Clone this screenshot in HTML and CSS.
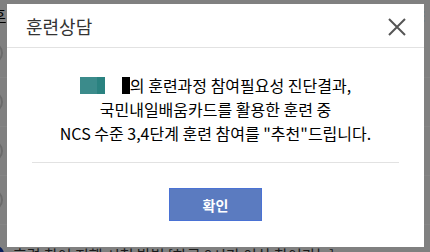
FILE: index.html
```html
<html>
    <head>
        <title>훈련상담</title>
        <link rel="stylesheet" href="styles.css">
    </head>
    <body>
        <div class="page">
            <div class="top-row"><span class="top-text">후</span><span class="dots">⋮</span></div>
            <div class="row"><span class="radio"></span></div>
            <div class="row"><span class="radio"></span></div>
            <div class="row"><span class="radio"></span></div>
            <div class="row"><span class="radio"></span></div>
            <div class="bottom-row"><span class="dot"></span><span class="bottom-text">훈련 참여 진행 시청 방법 [하루 8시간 이상 참여가능]</span></div>
        </div>

        <div class="overlay"></div>

        <div class="modal">
            <header>
                <h3>훈련상담</h3>
                <div class="cross">
                    <svg width="18" height="18" viewBox="0 0 18 18">
                        <path d="M1 1 L17 17 M17 1 L1 17" stroke="#555" stroke-width="2" fill="none"/>
                    </svg>
                </div>
            </header>
            <div class="content">
                <div class="message">
                    <p><span class="mask"></span><span class="bar"></span>의 훈련과정 참여필요성 진단결과,</p>
                    <p>국민내일배움카드를 활용한 훈련 중</p>
                    <p>NCS 수준 3,4단계 훈련 참여를 "추천"드립니다.</p>
                </div>
                <div class="footer">
                    <button>확인</button>
                </div>
            </div>
        </div>
    </body>
</html>
```

FILE: styles.css
```css
body{
    margin: 0;
    width: 430px;
    height: 252px;
    overflow: hidden;
    background: #f6f6f6;
    font-family: "Noto Sans CJK KR", "Noto Sans", sans-serif;
}
.page{
    display: flex;
    flex-direction: column;
}
.top-row{
    height: 29px;
    display: flex;
    justify-content: space-between;
    align-items: center;
}
.top-text{
    margin-left: -8px;
    font-size: 15px;
    color: #000;
    text-decoration: underline;
}
.dots{
    font-size: 14px;
    color: #000;
}
.row{
    height: 48px;
    border-bottom: 1px solid #ffffff;
    display: flex;
    align-items: center;
}
.radio{
    width: 18px;
    height: 18px;
    border: 2px solid #ccc;
    border-radius: 50%;
    margin-left: -19px;
}
.bottom-row{
    display: flex;
    align-items: center;
    height: 30px;
    padding-top: 14px;
}
.dot{
    width: 16px;
    height: 16px;
    border-radius: 50%;
    background: #1a3fae;
    margin-left: -12px;
    margin-right: 9px;
}
.bottom-text{
    font-size: 15px;
    color: #333;
}
.overlay{
    position: fixed;
    top: 0;
    left: 0;
    right: 0;
    bottom: 0;
    background: rgba(0,0,0,0.48);
}
.modal{
    position: fixed;
    top: 4px;
    left: 7px;
    width: 417px;
    height: 243px;
    background: white;
}
header{
    height: 43px;
    border-bottom: 1px solid #e2e2e2;
    display: flex;
    justify-content: space-between;
    align-items: center;
    padding: 0 19px;
}
h3{
    margin: 0;
    font-size: 18px;
    font-weight: normal;
    color: #333;
}
.cross{
    width: 18px;
    height: 18px;
    margin-top: 2px;
    margin-right: -1px;
    cursor: pointer;
}
.cross svg{
    display: block;
}
.content{
    padding: 0 25px;
}
.message{
    padding: 25px 0 17px;
    border-bottom: 1px solid #e2e2e2;
    text-align: center;
    font-size: 16px;
    color: #000;
}
p{
    margin: 0;
    line-height: 24px;
}
.mask{
    display: inline-block;
    width: 25px;
    height: 17px;
    background: linear-gradient(90deg,#3b8b8b 68%,#2a8280 68%);
    margin-right: 17px;
    vertical-align: -2px;
}
.bar{
    display: inline-block;
    width: 8px;
    height: 17px;
    background: #000;
    vertical-align: -2px;
}
.footer{
    display: flex;
    justify-content: center;
    padding-top: 25px;
}
button{
    width: 93px;
    height: 33px;
    background: #5b7bc0;
    border: 1px solid #4a72d4;
    color: white;
    font-size: 14px;
    font-weight: bold;
    font-family: "Noto Sans CJK KR", sans-serif;
    cursor: pointer;
}
```
